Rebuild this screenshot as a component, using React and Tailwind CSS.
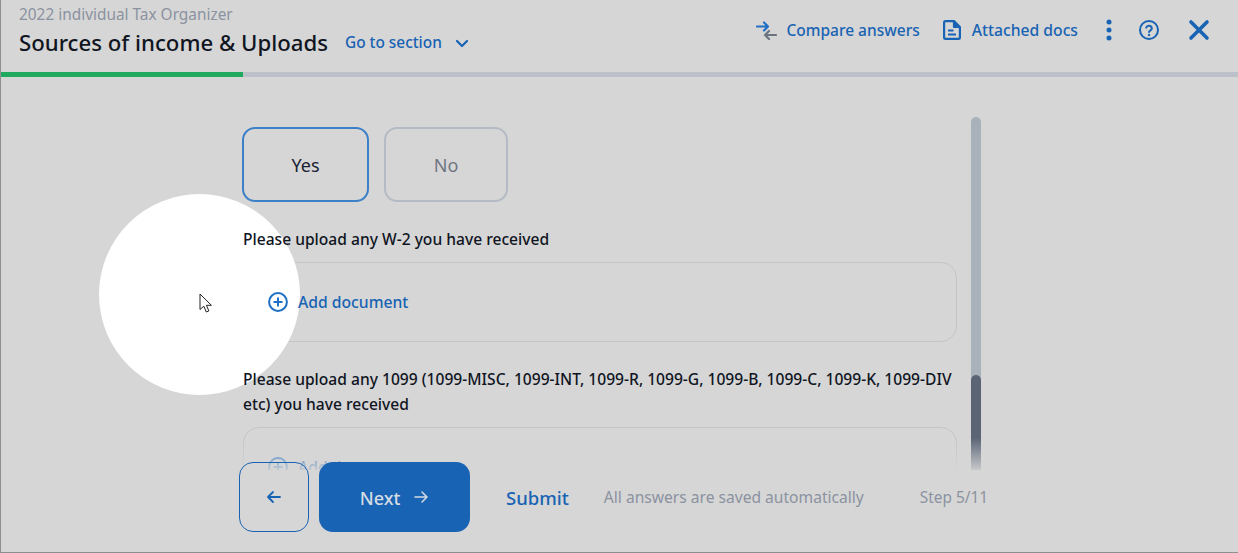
import React from "react";

function PlusCircle({ className }) {
  return (
    <svg className={className} width="20" height="20" viewBox="0 0 20 20" fill="none" stroke="#1f6fc4" strokeWidth="2">
      <circle cx="10" cy="10" r="8.9" />
      <path d="M10 5.500v9M5.500 10h9" />
    </svg>
  );
}

function ScrollContent() {
  return (
    <div className="w-[714px] flex flex-col">
      <div className="flex gap-[15px] mt-[50px] -ml-[1px]">
        <button className="relative z-20 w-[127px] h-[75px] pt-[2px] rounded-[13px] border-2 border-[#3d80c8] text-[18px] text-[#1a2233] flex items-center justify-center">Yes</button>
        <button className="relative z-20 w-[124px] h-[75px] pt-[2px] rounded-[13px] border-2 border-[#b5bbc5] text-[18px] text-[#6f7683] flex items-center justify-center">No</button>
      </div>
      <p className="relative z-20 mt-[25px] text-[15.6px] leading-[25px] font-medium text-[#10151f]">Please upload any W-2 you have received</p>
      <div className="mt-[10px] h-[80px] rounded-[16px] border border-[#c3c5c9] flex items-center pl-[24px] gap-[10px]">
        <PlusCircle className="relative z-20" />
        <span className="relative z-20 pt-[2px] text-[15.7px] font-medium text-[#1863b3]">Add document</span>
      </div>
      <p className="relative z-20 mt-[25px] text-[15.6px] leading-[25px] font-medium text-[#10151f]">Please upload any 1099 (1099-MISC, 1099-INT, 1099-R, 1099-G, 1099-B, 1099-C, 1099-K, 1099-DIV etc) you have received</p>
      <div className="mt-[10px] h-[80px] rounded-[16px] border border-[#c3c5c9] flex items-center pl-[24px] gap-[10px]">
        <PlusCircle />
        <span className="pt-[2px] text-[15.7px] font-medium text-[#1863b3]">Add document</span>
      </div>
    </div>
  );
}

export default function App() {
  return (
    <div className="relative w-[1238px] h-[553px] overflow-hidden bg-[#d6d6d6] border-l border-b border-[#8f8f8f] font-['Noto_Sans',sans-serif] flex flex-col">
      <header className="h-[72px] shrink-0 flex justify-between pl-[18px] pr-[28px]">
        <div className="flex flex-col">
          <div className="mt-[4px] text-[15.4px] leading-[22px] text-[#8b92a0]">2022 individual Tax Organizer</div>
          <div className="flex items-center mt-[2px]">
            <h1 className="text-[22.2px] leading-[30px] font-medium text-[#10151f]">Sources of income &amp; Uploads</h1>
            <span className="ml-[17px] text-[15.4px] font-medium text-[#1863b3]">Go to section</span>
            <svg className="ml-[13px]" width="14" height="9" viewBox="0 0 14 9" fill="none" stroke="#1863b3" strokeWidth="2.200" strokeLinecap="round" strokeLinejoin="round"><path d="M2 2l5 5 5-5" /></svg>
          </div>
        </div>
        <div className="flex items-center h-[60px]">
          <svg width="21" height="19" viewBox="0 0 21 19" fill="none" strokeWidth="2.200" strokeLinecap="round" strokeLinejoin="round">
            <path d="M1 5.500h11M8 1.500l4 4-4 4" stroke="#1f6fc4" />
            <path d="M20 14H9M13 10l-4 4 4 4" stroke="#6c7480" />
          </svg>
          <span className="ml-[9px] pt-[2px] text-[15.500px] font-medium text-[#1863b3]">Compare answers</span>
          <svg className="ml-[23px]" width="18" height="20" viewBox="0 0 18 20" fill="none" stroke="#1863b3" strokeWidth="2.200" strokeLinejoin="round">
            <path d="M1.100 2.500A1.400 1.400 0 0 1 2.500 1.100H11L16.900 7v10.500a1.400 1.400 0 0 1-1.400 1.400h-13a1.400 1.400 0 0 1-1.400-1.400z" />
            <path d="M11 2v5h5" fill="#1863b3" />
            <path d="M5 10.500h5.500M5 14.500h8" />
          </svg>
          <span className="ml-[11px] pt-[2px] text-[15.700px] font-medium text-[#1863b3]">Attached docs</span>
          <svg className="ml-[28px]" width="6" height="22" viewBox="0 0 6 22" fill="#1863b3"><circle cx="3" cy="3" r="2.500" /><circle cx="3" cy="11" r="2.500" /><circle cx="3" cy="19" r="2.500" /></svg>
          <svg className="ml-[27px]" width="20" height="20" viewBox="0 0 20 20" fill="none" stroke="#1863b3" strokeWidth="2" strokeLinecap="round"><circle cx="10" cy="10" r="9" /><path d="M7.200 7.600a2.900 2.900 0 0 1 5.600.8c0 1.900-2.800 2.300-2.800 3.600" /><path d="M10 15v.1" strokeWidth="2.400" /></svg>
          <svg className="ml-[29px]" width="22" height="22" viewBox="0 0 22 22" fill="none" stroke="#1863b3" strokeWidth="3.600" strokeLinecap="round"><path d="M3 3l16 16M19 3L3 19" /></svg>
        </div>
      </header>

      <div className="h-[5px] shrink-0 bg-[#bcc0c9]">
        <div className="h-full w-[242px] bg-[#1faa5f]" />
      </div>

      <main className="h-[393px] shrink-0 flex overflow-hidden relative">
        <div className="ml-[242px]"><ScrollContent /></div>
        <div className="ml-[14px] mt-[40px] w-[10px] h-[353px] rounded-t-[5px] bg-[#a9b1bb] overflow-hidden flex flex-col justify-end">
          <div className="h-[95px] rounded-t-[5px] bg-[#5a6475]" />
        </div>
        <div className="absolute z-20 left-0 right-0 bottom-0 h-[32px] bg-gradient-to-b from-[#d6d6d600] to-[#d6d6d6e0]" />
      </main>

      <footer className="relative z-30 -mt-[8px] flex items-center pl-[238px] h-[70px]">
        <button className="w-[70px] h-[70px] rounded-[14px] border border-[#1863b3] flex items-center justify-center">
          <svg width="16" height="14" viewBox="0 0 16 14" fill="none" stroke="#1863b3" strokeWidth="1.800" strokeLinecap="round" strokeLinejoin="round"><path d="M14 7H2M7 2L2 7l5 5" /></svg>
        </button>
        <button className="ml-[10px] w-[151px] h-[70px] rounded-[14px] bg-[#1863b3] flex items-center justify-center gap-[13px] text-[18px] font-medium text-[#d6dbe3]">
          <span className="pt-[2px]">Next</span>
          <svg width="16" height="14" viewBox="0 0 16 14" fill="none" stroke="#d6dbe3" strokeWidth="1.500" strokeLinecap="round" strokeLinejoin="round"><path d="M2 7h12M9 2l5 5-5 5" /></svg>
        </button>
        <span className="ml-[36px] pt-[2px] text-[18.500px] font-medium text-[#1863b3]">Submit</span>
        <span className="ml-[35px] pt-[2px] text-[15.600px] text-[#8b92a0]">All answers are saved automatically</span>
        <span className="ml-[56px] pt-[2px] text-[15.400px] text-[#8b92a0]">Step 5/11</span>
      </footer>

      <div className="absolute z-10 left-[98px] top-[194px] w-[201px] h-[201px] rounded-full bg-white" />
      <svg className="absolute z-40 left-[198px] top-[293px]" width="14" height="21" viewBox="0 0 14 21" fill="#ffffff" stroke="#222" strokeWidth="1"><path d="M1 1v15.500l3.800-3.300 2.500 5.800 2.600-1.100-2.500-5.600h5z" /></svg>
    </div>
  );
}
